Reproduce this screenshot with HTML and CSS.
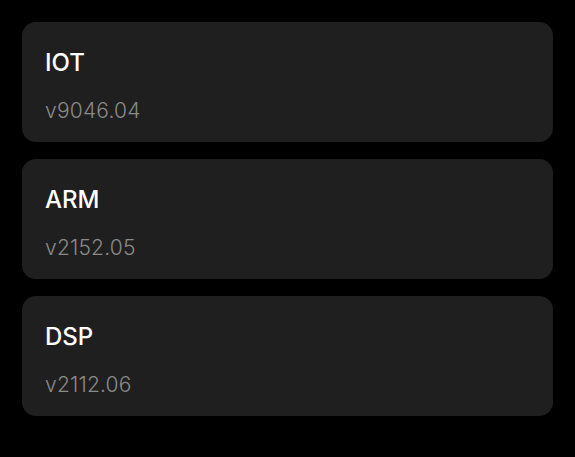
FILE: index.html
```html
<!DOCTYPE html>
<html lang="en">
<head>
<meta charset="utf-8">
<link rel="stylesheet" href="styles.css">
</head>
<body>
<div class="list">
  <div class="card">
    <div class="title">IOT</div>
    <div class="version">v9046.04</div>
  </div>
  <div class="card">
    <div class="title">ARM</div>
    <div class="version">v2152.05</div>
  </div>
  <div class="card">
    <div class="title">DSP</div>
    <div class="version">v2112.06</div>
  </div>
</div>
</body>
</html>
```
FILE: styles.css
```css
html, body {
  margin: 0;
  background: #000;
}
body {
  font-family: Inter, "Noto Sans", sans-serif;
}
.list {
  display: flex;
  flex-direction: column;
  gap: 17px;
  padding: 22px;
}
.card {
  background: #1f1f1f;
  border-radius: 14px;
  padding: 26px 23px 19px;
  height: 120px;
  box-sizing: border-box;
}
.title {
  color: #fff;
  font-size: 24px;
  line-height: 29px;
  font-weight: 500;
}
.version {
  margin-top: 22px;
  color: #8a8a8a;
  font-size: 21px;
  line-height: 24px;
  font-weight: 300;
  letter-spacing: 0.2px;
}
```
